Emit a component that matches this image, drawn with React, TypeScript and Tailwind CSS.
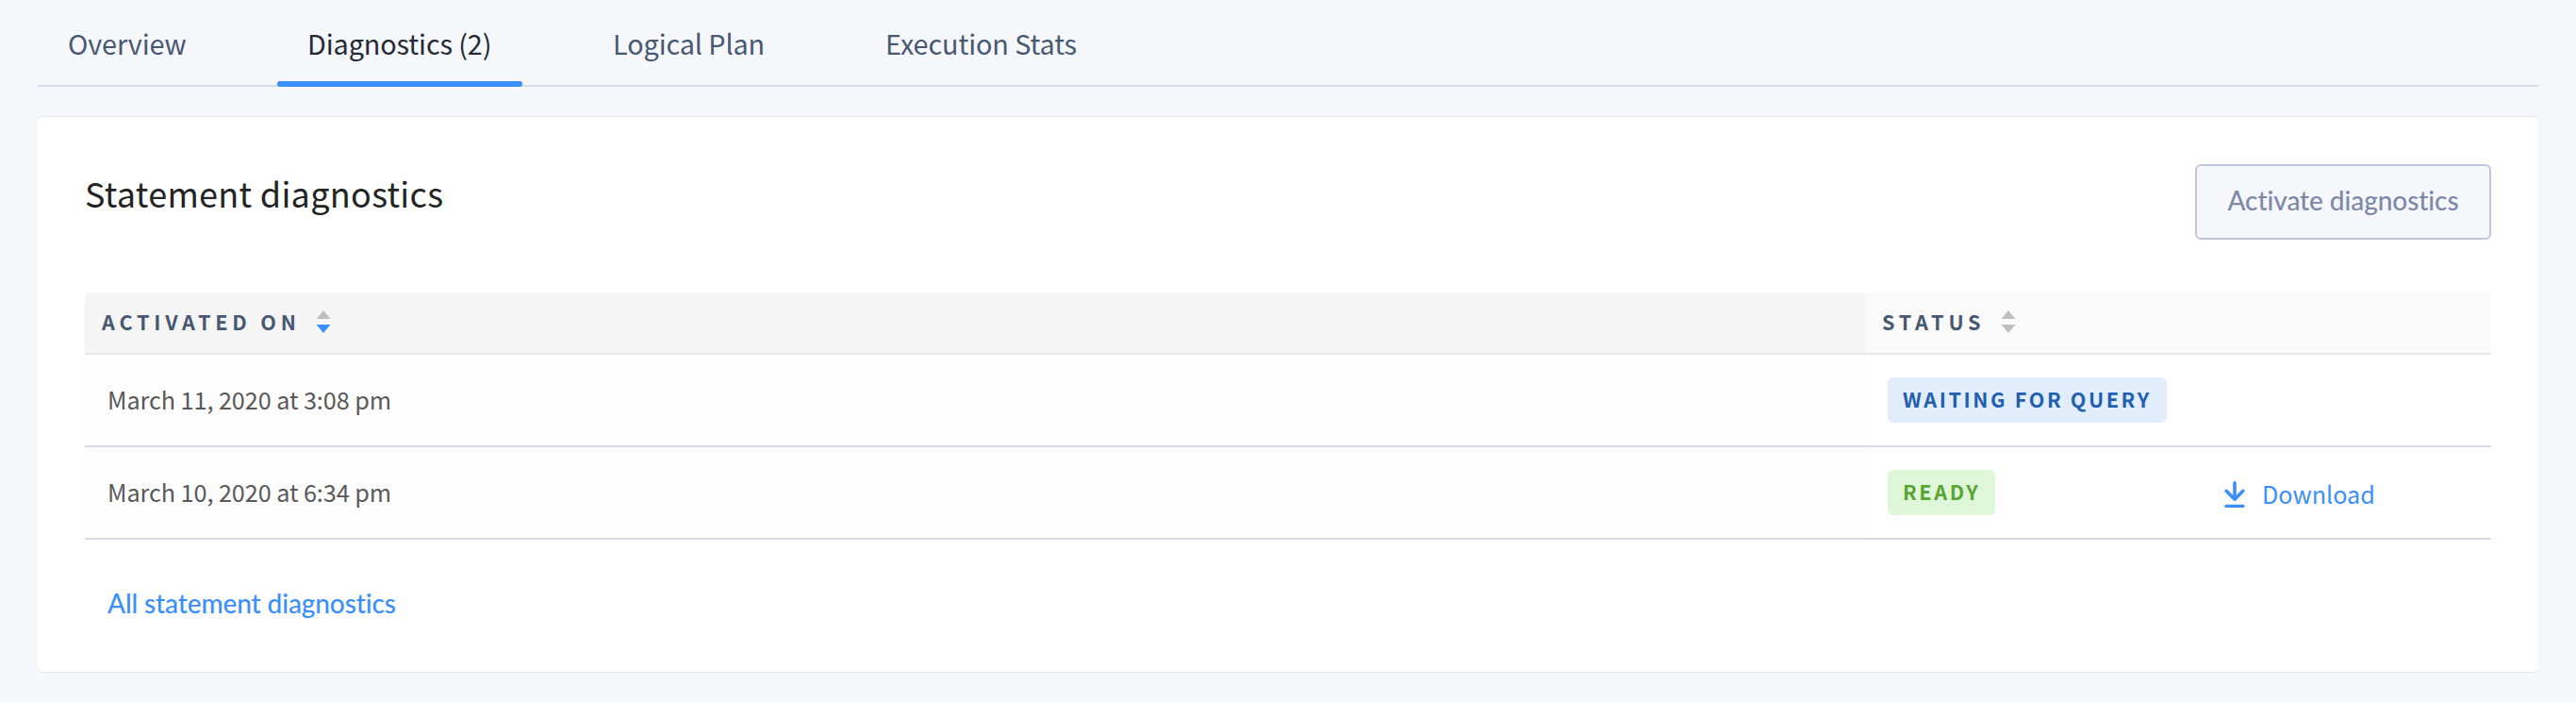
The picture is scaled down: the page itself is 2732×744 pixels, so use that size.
const tabs = [
  { label: "Overview", active: false, width: "w-[190px]" },
  { label: "Diagnostics (2)", active: true, width: "w-[260px]" },
  { label: "Logical Plan", active: false, width: "w-[225px]" },
  { label: "Execution Stats", active: false, width: "w-[268px]" },
];

const rows = [
  { date: "March 11, 2020 at 3:08 pm", status: "WAITING FOR QUERY", badge: "w-[296px] bg-[#e1edfa] text-[#2160b0]", download: false },
  { date: "March 10, 2020 at 6:34 pm", status: "READY", badge: "w-[114px] bg-[#dff7d9] text-[#59a532]", download: true },
];

function SortArrows({ descending = false }: { descending?: boolean }) {
  return (
    <svg width="16" height="24" viewBox="0 0 16 24" className="shrink-0">
      <path d="M8 0L15.5 9H0.5Z" fill="#bfbfbf" />
      <path d="M8 24L15.5 15H0.5Z" fill={descending ? "#3a8ffb" : "#bfbfbf"} />
    </svg>
  );
}

function DownloadIcon() {
  return (
    <svg
      width="40"
      height="28"
      viewBox="0 0 40 28"
      fill="none"
      stroke="currentColor"
      strokeWidth="3.6"
      strokeLinecap="round"
      strokeLinejoin="round"
      className="mr-[9px] shrink-0"
    >
      <path d="M20 1.8V19M11.1 10.3L20 19.2L28.9 10.3" />
      <path d="M11 26.35H29" strokeWidth="3.3" />
    </svg>
  );
}

export default function App() {
  return (
    <div className="h-[744px] w-[2732px] overflow-hidden bg-[#f5f7fb] px-10 font-['Noto_Sans_CJK_SC',sans-serif] [font-variant-ligatures:none]">
      <nav className="flex h-[92px] gap-16 border-b-2 border-[#d6dbe7]">
        {tabs.map((t) => (
          <div
            key={t.label}
            className={`flex h-[92px] shrink-0 flex-col justify-between px-8 pt-[26px] text-[28.8px] leading-10 tracking-[-0.1px] whitespace-nowrap ${t.width} ${t.active ? "text-[#242a35]" : "text-[#475872]"}`}
          >
            <span>{t.label}</span>
            {t.active && <div className="-mx-8 h-1.5 rounded-[3px] bg-[#3a8ffb]" />}
          </div>
        ))}
      </nav>

      <section className="mt-[31px] h-[590px] rounded-md border-y border-[#e4e7ee] bg-white px-[50px] pt-[50px]">
        <div className="flex h-[136px] items-start justify-between">
          <h1 className="pt-0.5 text-[36px] leading-[56px] tracking-[0.3px] text-[#242424]">Statement diagnostics</h1>
          <button className="h-20 w-[314px] rounded-md border-2 border-[#c0c6d9] bg-[#f5f7fb] pb-1 font-[Lato] text-[28px] font-medium tracking-[-0.07px] text-[#7e89a9]">
            Activate diagnostics
          </button>
        </div>

        <div className="flex h-[66px] overflow-hidden rounded-t-md border-b-2 border-[#e8e8e8] text-[21.6px] font-bold tracking-[4.8px] text-[#475872]">
          <div className="flex w-[1888px] items-center gap-[16.6px] bg-[#f5f5f5] pb-0.5 pl-[18px]">
            <span>ACTIVATED ON</span>
            <SortArrows descending />
          </div>
          <div className="flex flex-1 items-center gap-[16.6px] bg-[#fafafa] pb-0.5 pl-[18px]">
            <span>STATUS</span>
            <SortArrows />
          </div>
        </div>

        {rows.map((r) => (
          <div key={r.date} className="flex h-[98px] border-b-2 border-[#d6dbe7]">
            <div className="flex w-[1888px] items-center bg-[#fdfdfd] pl-6 text-[25.2px] tracking-[-0.06px] text-[#595959]">
              {r.date}
            </div>
            <div className="flex flex-1 items-center pl-6">
              <div className="w-[348px]">
                <div className={`flex h-12 items-center rounded-md pb-0.5 pl-4 text-[21.6px] font-bold tracking-[2.6px] whitespace-nowrap ${r.badge}`}>
                  {r.status}
                </div>
              </div>
              {r.download && (
                <div className="flex items-center pt-1 text-[25.2px] text-[#3a8ffb]">
                  <DownloadIcon />
                  <span>Download</span>
                </div>
              )}
            </div>
          </div>
        ))}

        <div className="pt-[46px] pl-6 font-[Lato] text-[28px] font-medium tracking-[-0.11px] text-[#3a8ffb]">
          All statement diagnostics
        </div>
      </section>
    </div>
  );
}
